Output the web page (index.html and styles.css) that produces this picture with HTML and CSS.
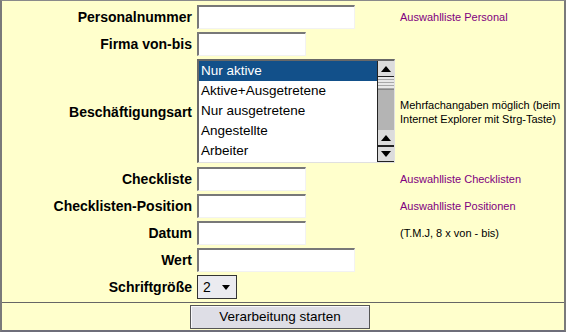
FILE: index.html
```html
<!DOCTYPE html>
<html lang="de">
<head>
<meta charset="utf-8">
<title>Auswertung</title>
<link rel="stylesheet" href="styles.css">
</head>
<body>
<div class="frame">
  <div class="form">
    <label class="lbl">Personalnummer</label>
    <div class="field"><span class="input long"></span></div>
    <div class="note link">Auswahlliste Personal</div>

    <label class="lbl">Firma von-bis</label>
    <div class="field"><span class="input short"></span></div>
    <div class="note"></div>

    <label class="lbl">Beschäftigungsart</label>
    <div class="field">
      <div class="listbox">
        <ul class="options">
          <li class="sel">Nur aktive</li>
          <li>Aktive+Ausgetretene</li>
          <li>Nur ausgetretene</li>
          <li>Angestellte</li>
          <li>Arbeiter</li>
        </ul>
        <div class="scrollbar">
          <span class="sbtn"><span class="tri up"></span></span>
          <span class="thumb"></span>
          <span class="track"></span>
          <span class="sbtn"><span class="tri up"></span></span>
          <span class="sbtn"><span class="tri down"></span></span>
        </div>
      </div>
    </div>
    <div class="note">Mehrfachangaben möglich (beim<br>Internet Explorer mit Strg-Taste)</div>

    <label class="lbl">Checkliste</label>
    <div class="field"><span class="input short"></span></div>
    <div class="note link">Auswahlliste Checklisten</div>

    <label class="lbl">Checklisten-Position</label>
    <div class="field"><span class="input short"></span></div>
    <div class="note link">Auswahlliste Positionen</div>

    <label class="lbl">Datum</label>
    <div class="field"><span class="input short"></span></div>
    <div class="note">(T.M.J, 8 x von - bis)</div>

    <label class="lbl">Wert</label>
    <div class="field"><span class="input long"></span></div>
    <div class="note"></div>

    <label class="lbl">Schriftgröße</label>
    <div class="field"><span class="select">2<span class="tri down"></span></span></div>
    <div class="note"></div>
  </div>
  <div class="actions">
    <button class="btn" type="button">Verarbeitung starten</button>
  </div>
</div>
</body>
</html>
```

FILE: styles.css
```css
html, body {
  margin: 0;
  padding: 0;
  background: #ffffcc;
}
body {
  font-family: "Liberation Sans", Arial, sans-serif;
  color: #000;
}
.frame {
  width: 566px;
  height: 332px;
  box-sizing: border-box;
  border-top: 1px solid #8a8a8a;
  border-left: 2px solid #7a7a7a;
  border-right: 2px solid #7a7a7a;
  border-bottom: 2px solid #6e6e7a;
  background: #ffffcc;
  display: flex;
  flex-direction: column;
}
.form {
  display: grid;
  grid-template-columns: 190px 198px 1fr;
  column-gap: 5px;
  row-gap: 3px;
  padding: 4px 0 3px 0;
  align-items: center;
}
.lbl {
  font-weight: bold;
  font-size: 14px;
  text-align: right;
  white-space: nowrap;
}
.field {
  display: flex;
  align-items: center;
}
.input {
  display: block;
  height: 24px;
  box-sizing: border-box;
  background: #fff;
  border-style: solid;
  border-width: 2px 1px 1px 2px;
  border-color: #787878 #f2f2f2 #f2f2f2 #787878;
}
.input.long { width: 158px; }
.input.short { width: 109px; }
.note {
  font-size: 11px;
  line-height: 14px;
  color: #000;
}
.note.link { color: #800080; }

.listbox {
  display: flex;
  width: 198px;
  height: 104px;
  box-sizing: border-box;
  border-style: solid;
  border-width: 2px 1px 1px 2px;
  border-color: #686868 #e0e0e0 #e0e0e0 #686868;
  background: #fff;
  margin-bottom: 1px;
}
.options {
  list-style: none;
  margin: 0;
  padding: 0;
  flex: 1;
  font-size: 13.5px;
}
.options li {
  height: 20px;
  line-height: 20px;
  padding-left: 2px;
  white-space: nowrap;
}
.options li.sel {
  background: #12508a;
  color: #fff;
}
.scrollbar {
  width: 16px;
  display: flex;
  flex-direction: column;
  border-left: 1px solid #222;
}
.sbtn {
  height: 16px;
  box-sizing: border-box;
  background: #dcdcdc;
  border-bottom: 1px solid #222;
  display: flex;
  align-items: center;
  justify-content: center;
}
.sbtn + .sbtn { border-top: 1px solid #222; }
.thumb {
  height: 13px;
  box-sizing: border-box;
  background: repeating-linear-gradient(#e8e8e8 0 2px, #a8a8a8 2px 3px);
  border-bottom: 1px solid #888;
}
.track {
  flex: 1;
  background: #b4b4b4;
}
.tri {
  display: inline-block;
  width: 0;
  height: 0;
  border-left: 5px solid transparent;
  border-right: 5px solid transparent;
}
.tri.up { border-bottom: 6px solid #000; }
.tri.down { border-top: 6px solid #000; }

.select {
  width: 40px;
  height: 24px;
  box-sizing: border-box;
  border: 1px solid #333;
  background: #ebebf0;
  font-size: 14px;
  display: flex;
  align-items: center;
  justify-content: space-between;
  padding: 0 6px 0 5px;
}
.select .tri {
  border-left-width: 4px;
  border-right-width: 4px;
  border-top-width: 5px;
}

.actions {
  border-top: 1px solid #666;
  flex: 1;
  display: flex;
  align-items: center;
  padding-left: 188px;
}
.btn {
  width: 180px;
  height: 24px;
  font-family: "Liberation Sans", Arial, sans-serif;
  font-size: 13.5px;
  color: #000;
  background: #dedee6;
  border: 1px solid #555;
  box-shadow: inset 1px 1px 0 #f8f8fb;
  padding: 0;
}
```
